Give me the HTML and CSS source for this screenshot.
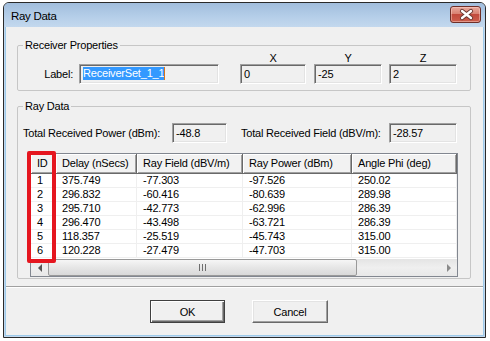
FILE: index.html
```html
<!DOCTYPE html>
<html lang="en">
<head>
    <meta charset="UTF-8">
    <meta name="viewport" content="width=device-width, initial-scale=1.0">
    <title>Ray Data</title>
    <link rel="stylesheet" href="styles.css">
</head>
<body>
    <div class="window">
        <div class="titlebar">
            <span class="title">Ray Data</span>
            <button class="close-btn" aria-label="Close">
                <svg width="29" height="15" viewBox="0 0 29 15">
                    <path d="M11 4 L20 11 M20 4 L11 11" stroke="#6b3a33" stroke-width="4.2" stroke-linecap="round"/>
                    <path d="M11 4 L20 11 M20 4 L11 11" stroke="#fff" stroke-width="2.3" stroke-linecap="round"/>
                </svg>
            </button>
        </div>

        <div class="client">
            <fieldset class="group group-receiver">
                <legend>Receiver Properties</legend>
                <div class="receiver-row">
                    <span class="field-label">Label:</span>
                    <div class="textbox label-box"><span class="selected">ReceiverSet_1_1</span><span class="caret"></span></div>
                    <div class="coord coord-x">
                        <span class="coord-label">X</span>
                        <div class="textbox">0</div>
                    </div>
                    <div class="coord coord-y">
                        <span class="coord-label">Y</span>
                        <div class="textbox">-25</div>
                    </div>
                    <div class="coord coord-z">
                        <span class="coord-label">Z</span>
                        <div class="textbox">2</div>
                    </div>
                </div>
            </fieldset>

            <fieldset class="group group-ray">
                <legend>Ray Data</legend>
                <div class="total-row">
                    <span class="total-label power-label">Total Received Power (dBm):</span>
                    <div class="textbox power-box">-48.8</div>
                    <span class="total-label field-label-2">Total Received Field (dBV/m):</span>
                    <div class="textbox field-box">-28.57</div>
                </div>

                <div class="list-wrap">
                    <div class="list-body">
                        <div class="grid">
                            <div class="hcell">ID</div>
                            <div class="hcell">Delay (nSecs)</div>
                            <div class="hcell">Ray Field (dBV/m)</div>
                            <div class="hcell">Ray Power (dBm)</div>
                            <div class="hcell">Angle Phi (deg)</div>

                            <div class="cell">1</div><div class="cell">375.749</div><div class="cell">-77.303</div><div class="cell">-97.526</div><div class="cell">250.02</div>
                            <div class="cell">2</div><div class="cell">296.832</div><div class="cell">-60.416</div><div class="cell">-80.639</div><div class="cell">289.98</div>
                            <div class="cell">3</div><div class="cell">295.710</div><div class="cell">-42.773</div><div class="cell">-62.996</div><div class="cell">286.39</div>
                            <div class="cell">4</div><div class="cell">296.470</div><div class="cell">-43.498</div><div class="cell">-63.721</div><div class="cell">286.39</div>
                            <div class="cell">5</div><div class="cell">118.357</div><div class="cell">-25.519</div><div class="cell">-45.743</div><div class="cell">315.00</div>
                            <div class="cell">6</div><div class="cell">120.228</div><div class="cell">-27.479</div><div class="cell">-47.703</div><div class="cell">315.00</div>
                        </div>
                    </div>
                    <div class="hscroll">
                        <div class="sb-btn"><span class="arrow-left"></span></div>
                        <div class="thumb">
                            <svg width="7" height="7" viewBox="0 0 7 7">
                                <path d="M0.5 0 V7 M3.5 0 V7 M6.5 0 V7" stroke="#6e6e6e" stroke-width="1"/>
                            </svg>
                        </div>
                        <div class="track"></div>
                        <div class="sb-btn"><span class="arrow-right"></span></div>
                    </div>
                    <div class="highlight"></div>
                </div>
            </fieldset>

            <div class="separator"></div>

            <div class="buttons">
                <button class="btn btn-default">OK</button>
                <button class="btn btn-cancel">Cancel</button>
            </div>
        </div>
    </div>
</body>
</html>
```

FILE: styles.css
```css
body {
    margin: 0;
    padding: 2px 0 0 3px;
    background: #fff;
    font-family: "Liberation Sans", Arial, sans-serif;
    font-size: 11px;
    letter-spacing: -0.2px;
    color: #000;
}

/* window frame */
.window {
    width: 483px;
    height: 336px;
    box-sizing: border-box;
    border: 1px solid #2a2a2a;
    border-radius: 6px 6px 0 0;
    background: #c3d8ee;
    padding: 0 1px 1px;
    display: flex;
    flex-direction: column;
    overflow: hidden;
}
.titlebar {
    height: 24px;
    flex: none;
    margin: 0 -1px;
    padding: 0 4px 0 7px;
    display: flex;
    justify-content: space-between;
    align-items: flex-start;
    background: linear-gradient(#a1bedd, #b6cfe9 60%, #c3d8ee);
}
.title {
    padding-top: 2px;
    line-height: 22px;
    font-size: 11.5px;
    letter-spacing: -0.3px;
}
.close-btn {
    margin-top: 3px;
    width: 31px;
    height: 17px;
    padding: 0;
    border: 1px solid #6e2e27;
    border-radius: 3px;
    background: linear-gradient(#e8a89c, #d98272 45%, #c24a3c 50%, #cc5e4c);
    box-shadow: inset 0 0 0 1px rgba(255, 220, 210, 0.45);
    display: flex;
    align-items: center;
    justify-content: center;
}

.client {
    flex: 1;
    background: #f0f0f0;
    border: 1px solid #9ccaea;
    border-top: none;
    display: flex;
    flex-direction: column;
}

/* group boxes */
.group {
    margin: 12px 0 0 11px;
    width: 454px;
    box-sizing: border-box;
    border: 1px solid #c6c6c6;
    border-radius: 2px;
    padding: 0 0 6px;
    min-inline-size: 0;
}
.group legend {
    margin-left: 5px;
    padding: 0 2px;
    line-height: 13px;
}
.group-ray {
    margin-top: 9px;
    padding-bottom: 1px;
}

.textbox {
    box-sizing: border-box;
    height: 20px;
    border: 1px solid;
    border-color: #a0a0a0 #fff #fff #a0a0a0;
    box-shadow: inset 1px 1px 0 #696969, inset -1px -1px 0 #e3e3e3;
    background: #f0f0f0;
    padding: 0 3px;
    line-height: 18px;
    white-space: nowrap;
}

/* receiver row */
.receiver-row {
    display: flex;
    align-items: flex-end;
}
.field-label {
    width: 55px;
    text-align: right;
    line-height: 20px;
}
.label-box {
    margin-left: 6px;
    width: 140px;
}
.selected {
    display: inline-block;
    vertical-align: top;
    margin-top: 2px;
    line-height: 13px;
    background: #3399ff;
    color: #fff;
}
.caret {
    display: inline-block;
    vertical-align: top;
    margin-top: 2px;
    width: 1px;
    height: 13px;
    background: #d9731c;
}
.coord {
    display: flex;
    flex-direction: column;
}
.coord-label {
    height: 12px;
    line-height: 12px;
    text-align: center;
}
.coord-x { margin-left: 21px; width: 66px; }
.coord-y { margin-left: 8px; width: 68px; }
.coord-z { margin-left: 7px; width: 68px; }

/* totals */
.total-row {
    margin-top: 10px;
    display: flex;
    align-items: center;
}
.total-label {
    line-height: 20px;
    white-space: nowrap;
}
.power-label { margin-left: 5px; width: 149px; }
.power-box { width: 55px; }
.field-label-2 { margin-left: 14px; width: 148px; }
.field-box { width: 68px; }

/* list view */
.list-wrap {
    position: relative;
    margin: 10px 0 0 12px;
    width: 428px;
    height: 124px;
    box-sizing: border-box;
    border: 1px solid #828790;
    background: #fff;
    display: flex;
    flex-direction: column;
}
.list-body {
    flex: 1;
    overflow: hidden;
}
.grid {
    display: grid;
    grid-template-columns: 25px 81px 106px 109px 105px;
    grid-template-rows: 20px;
    grid-auto-rows: 14px;
}
.hcell {
    box-sizing: border-box;
    padding: 1px 0 0 6px;
    line-height: 17px;
    white-space: nowrap;
    overflow: hidden;
    background: #f2f2f2;
    border-right: 1px solid #696969;
    border-bottom: 1px solid #696969;
    box-shadow: inset 1px 1px 0 #fff, inset -1px -1px 0 #a0a0a0;
}
.cell {
    box-sizing: border-box;
    padding-left: 6px;
    line-height: 13px;
    white-space: nowrap;
    border-right: 1px solid #efefef;
    border-bottom: 1px solid #efefef;
}

.hscroll {
    height: 17px;
    flex: none;
    display: flex;
    background: linear-gradient(#e4e4e4, #efefef 50%, #e8e8e8);
}
.sb-btn {
    width: 17px;
    flex: none;
    display: flex;
    align-items: center;
    justify-content: center;
}
.arrow-left {
    border-top: 4px solid transparent;
    border-bottom: 4px solid transparent;
    border-right: 4px solid #555;
}
.arrow-right {
    border-top: 4px solid transparent;
    border-bottom: 4px solid transparent;
    border-left: 4px solid #8a8a8a;
}
.thumb {
    width: 309px;
    flex: none;
    box-sizing: border-box;
    border: 1px solid #999;
    border-radius: 2px;
    background: linear-gradient(#f6f6f6, #e6e6e6 50%, #d9d9d9);
    display: flex;
    align-items: center;
    justify-content: center;
}
.track {
    flex: 1;
}

.highlight {
    position: absolute;
    left: -4px;
    top: -3px;
    width: 29px;
    height: 112px;
    box-sizing: border-box;
    border: 4px solid #e5161f;
    border-radius: 2px;
}

/* bottom */
.separator {
    margin-top: 7px;
    height: 1px;
    background: #a0a0a0;
    border-bottom: 1px solid #fff;
}
.buttons {
    margin-top: 12px;
    display: flex;
}
.btn {
    width: 75px;
    height: 23px;
    box-sizing: border-box;
    padding: 0;
    font: inherit;
    letter-spacing: inherit;
    color: #000;
    background: #f0f0f0;
    border: 1px solid;
    border-color: #fff #696969 #696969 #fff;
    box-shadow: inset -1px -1px 0 #a0a0a0, inset 1px 1px 0 #e3e3e3;
}
.btn-default {
    margin-left: 144px;
    border: 1px solid #404040;
    box-shadow: inset 1px 1px 0 #fff, inset -1px -1px 0 #696969, inset -2px -2px 0 #a0a0a0;
}
.btn-cancel {
    margin-left: 27px;
    width: 76px;
}
```
